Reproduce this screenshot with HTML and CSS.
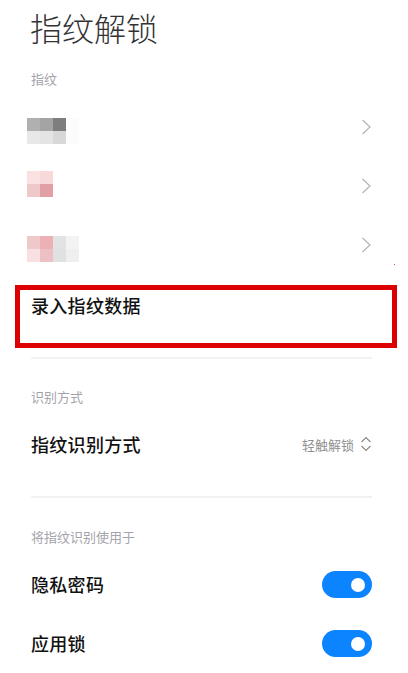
FILE: index.html
```html
<!DOCTYPE html>
<html lang="zh-CN">
<head>
    <meta charset="UTF-8">
    <meta name="viewport" content="width=device-width, initial-scale=1.0">
    <title>指纹解锁</title>
    <link rel="stylesheet" href="styles.css">
</head>
<body>
    <div class="page">
        <h1 class="title">指纹解锁</h1>

        <div class="section-label first-label">指纹</div>

        <div class="finger-row">
            <div class="mosaic mosaic-low">
                <i class="c1"></i><i class="c2"></i><i class="c3"></i><i class="c4"></i>
                <i class="c5"></i><i class="c6"></i><i class="c7"></i><i class="c4"></i>
            </div>
            <svg class="chevron" width="10" height="16" viewBox="0 0 10 16"><path d="M1.5 1l7.5 7-7.5 7"/></svg>
        </div>
        <div class="finger-row">
            <div class="mosaic mosaic-high">
                <i class="p1"></i><i class="p2"></i><i class="blank"></i><i class="blank"></i>
                <i class="p3"></i><i class="p4"></i><i class="blank"></i><i class="blank"></i>
            </div>
            <svg class="chevron" width="10" height="16" viewBox="0 0 10 16"><path d="M1.5 1l7.5 7-7.5 7"/></svg>
        </div>
        <div class="finger-row">
            <div class="mosaic mosaic-low">
                <i class="p3"></i><i class="p5"></i><i class="g1"></i><i class="g2"></i>
                <i class="p6"></i><i class="p7"></i><i class="g3"></i><i class="g4"></i>
            </div>
            <svg class="chevron" width="10" height="16" viewBox="0 0 10 16"><path d="M1.5 1l7.5 7-7.5 7"/></svg>
        </div>

        <div class="enroll-box">录入指纹数据</div>
        <div class="divider divider-one"></div>

        <div class="section-label">识别方式</div>
        <div class="row method-row">
            <span class="row-name">指纹识别方式</span>
            <span class="row-value">
                轻触解锁
                <svg class="updown" width="12" height="16" viewBox="0 0 12 16"><path d="M1.5 6l4.5-4.5 4.5 4.5M1.5 10l4.5 4.5 4.5-4.5"/></svg>
            </span>
        </div>
        <div class="divider divider-two"></div>

        <div class="section-label">将指纹识别使用于</div>
        <div class="row switch-row">
            <span class="row-name">隐私密码</span>
            <span class="switch"><span class="knob"></span></span>
        </div>
        <div class="row switch-row">
            <span class="row-name">应用锁</span>
            <span class="switch"><span class="knob"></span></span>
        </div>

        <span class="speck"></span>
    </div>
</body>
</html>
```

FILE: styles.css
```css
* {
    box-sizing: border-box;
}

html, body {
    margin: 0;
    height: 100%;
}

body {
    background-color: #ffffff;
    color: #111111;
    font-family: "Noto Sans CJK SC", "Noto Sans", sans-serif;
    overflow: hidden;
}

.page {
    position: relative;
    padding: 0 36px 0 31px;
}

.title {
    margin: 0;
    padding-top: 5px;
    height: 50px;
    font-size: 32px;
    line-height: 44px;
    font-weight: 300;
    color: #333333;
    margin-left: -1px;
}

.section-label {
    height: 20px;
    font-size: 13px;
    line-height: 20px;
    color: #a3a3ab;
}

.first-label {
    margin-top: 19px;
    margin-bottom: 9px;
}

.finger-row {
    display: flex;
    align-items: center;
    justify-content: space-between;
    height: 59px;
    margin-left: -4px;
}

.mosaic {
    display: grid;
    grid-template-columns: repeat(4, 13px);
    grid-template-rows: repeat(2, 13px);
}

.mosaic-low {
    margin-top: 7px;
}

.mosaic-high {
    margin-bottom: 6px;
}

.mosaic .c1 { background-color: #b0b0b0; }
.mosaic .c2 { background-color: #a4a4a4; }
.mosaic .c3 { background-color: #7e7e7e; }
.mosaic .c4 { background-color: #fcfcfc; }
.mosaic .c5 { background-color: #e8e8e8; }
.mosaic .c6 { background-color: #e4e4e4; }
.mosaic .c7 { background-color: #d8d8d8; }
.mosaic .p1 { background-color: #fbe1e2; }
.mosaic .p2 { background-color: #f8d9da; }
.mosaic .p3 { background-color: #efc8ca; }
.mosaic .p4 { background-color: #e0a0a5; }
.mosaic .p5 { background-color: #ecb0b5; }
.mosaic .p6 { background-color: #f8e0e2; }
.mosaic .p7 { background-color: #ecc0c4; }
.mosaic .g1 { background-color: #e2e3e4; }
.mosaic .g2 { background-color: #f3f3f3; }
.mosaic .g3 { background-color: #e0e2e2; }
.mosaic .g4 { background-color: #efefef; }

.chevron {
    margin-top: -2px;
    margin-right: 1px;
}

.chevron path {
    fill: none;
    stroke: #b4b4b4;
    stroke-width: 1.2;
}

.enroll-box {
    height: 63px;
    margin: 10px -25px 0 -16px;
    padding: 2px 0 0 11px;
    border: 5px solid #dc0000;
    font-size: 18px;
    line-height: 26px;
    font-weight: 500;
    letter-spacing: 0.3px;
}

.divider {
    height: 2px;
    background-color: #f2f2f2;
}

.divider-one {
    margin-top: 9px;
    margin-bottom: 28px;
}

.divider-two {
    margin-top: 32px;
    margin-bottom: 29px;
}

.row {
    display: flex;
    align-items: center;
    justify-content: space-between;
}

.row-name {
    font-size: 18px;
    line-height: 26px;
    font-weight: 500;
    letter-spacing: 0.3px;
}

.method-row {
    height: 40px;
    margin-top: 17px;
}

.row-value {
    display: flex;
    align-items: center;
    gap: 6px;
    font-size: 13px;
    color: #909090;
}

.updown path {
    fill: none;
    stroke: #8c8c8c;
    stroke-width: 1.2;
}

.switch-row {
    height: 59px;
}

.section-label + .switch-row {
    margin-top: 7px;
}

.switch {
    display: flex;
    align-items: center;
    justify-content: flex-end;
    width: 50px;
    height: 27px;
    margin-top: 2px;
    padding-right: 7px;
    border-radius: 14px;
    background-color: #0d84ff;
}

.knob {
    width: 14px;
    height: 14px;
    border-radius: 50%;
    background-color: #ffffff;
}

.speck {
    position: absolute;
    left: 394px;
    top: 264px;
    width: 1px;
    height: 1px;
    background-color: #e8505a;
}
```
